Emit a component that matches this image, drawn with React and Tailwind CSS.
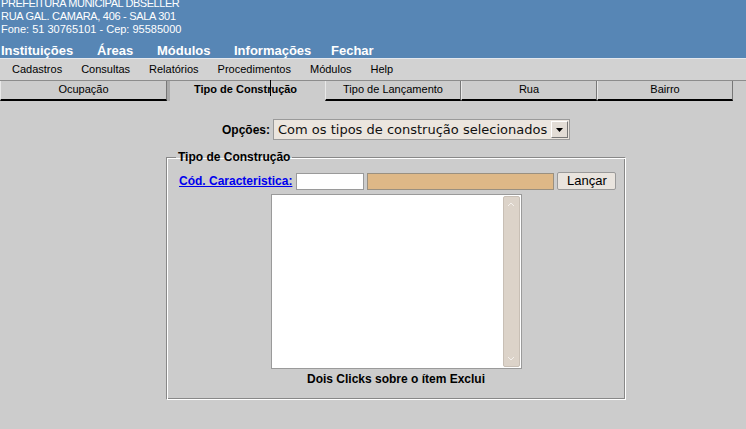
import React from "react";

export default function App() {
  return (
    <div className="relative w-[746px] h-[429px] overflow-hidden bg-[#cccccc] font-['Liberation_Sans',Arial,sans-serif] text-black">
      {/* Header */}
      <div className="flow-root h-[58px] bg-[#5786b5] text-white">
        <div className="-mt-[3px] pl-[1px] text-[11px] leading-[13px]">
          <div className="tracking-[-0.45px]">PREFEITURA MUNICIPAL DBSELLER</div>
          <div className="tracking-[-0.3px]">RUA GAL. CAMARA, 406 - SALA 301</div>
          <div className="whitespace-pre">Fone: 51 30765101 - Cep: 95585000</div>
        </div>
        <div className="mt-[7px] flex h-[15px] pl-[1px] text-[13px] font-bold leading-[15px]">
          <span className="w-[96px]">Instituições</span>
          <span className="w-[60px]">Áreas</span>
          <span className="w-[77px]">Módulos</span>
          <span className="w-[97px]">Informações</span>
          <span>Fechar</span>
        </div>
      </div>
      {/* Menu bar */}
      <div className="h-[1px] bg-[#e4e8ee]" />
      <div className="flex h-[22px] items-center gap-[19px] border-b border-[#8c8c8c] bg-[#d2d2d2] pl-[12px] text-[11px] leading-[13px]">
        <span>Cadastros</span>
        <span>Consultas</span>
        <span>Relatórios</span>
        <span>Procedimentos</span>
        <span>Módulos</span>
        <span>Help</span>
      </div>
      {/* Tabs */}
      <div className="flex h-[20px] text-[11px] leading-[13px]">
        <div className="w-[167px] border-l border-r border-b-2 border-l-[#e8e8e8] border-r-[#777] border-b-black pt-[2px] text-center">
          Ocupação
        </div>
        <div className="w-[158px] border-l-[3px] border-[#aaaaaa] pt-[2px] pl-[24px] font-bold">
          Tipo de Construção
        </div>
        <div className="w-[136px] border-l border-r border-b-2 border-l-[#e8e8e8] border-r-[#777] border-b-black pt-[2px] text-center">
          Tipo de Lançamento
        </div>
        <div className="w-[136px] border-l border-r border-b-2 border-l-[#e8e8e8] border-r-[#777] border-b-black pt-[2px] text-center">
          Rua
        </div>
        <div className="w-[136px] border-l border-r border-b-2 border-l-[#e8e8e8] border-r-[#777] border-b-black pt-[2px] text-center">
          Bairro
        </div>
      </div>

      {/* Opções */}
      <div className="mt-[18px] flex items-center pl-[222px]">
        <span className="mr-[3px] text-[12px] font-bold">Opções:</span>
        <div className="flex h-[21px] w-[297px] items-center border border-[#9a9a9a] bg-[#ebe5de]">
          <span className="flex-1 pl-[4px] font-['DejaVu_Sans',sans-serif] text-[13px] leading-[19px] text-[#111]">
            Com os tipos de construção selecionados
          </span>
          <div className="mr-[1px] flex h-[17px] w-[17px] items-center justify-center border border-t-white border-l-white border-r-[#777] border-b-[#777] bg-[#e2dcd5]">
            <svg width="7" height="4" viewBox="0 0 7 4">
              <path d="M0 0 H7 L3.5 4 Z" fill="#000" />
            </svg>
          </div>
        </div>
      </div>

      {/* Fieldset */}
      <fieldset className="ml-[166px] mt-[10px] w-[460px] border border-t-[#888] border-l-[#888] border-r-white border-b-white shadow-[inset_1px_1px_0_#ffffff,inset_-1px_-1px_0_#888888] pb-[13px]">
        <legend className="ml-[9px] px-[2px] text-[12px] font-bold leading-[14px]">Tipo de Construção</legend>
        <div className="mt-[8px] flex items-center pl-[12px]">
          <a className="text-[12px] font-bold leading-[14px] text-[#0000ee] underline">Cód. Caracteristica:</a>
          <div className="ml-[4px] h-[17px] w-[68px] border border-[#9a9a9a] bg-white" />
          <div className="ml-[3px] h-[17px] w-[187px] border border-[#9a9080] bg-[#deb887]" />
          <div className="ml-[3px] flex h-[18px] w-[59px] items-center justify-center rounded-[2px] border border-[#9a9a9a] bg-[#e9e4de] text-[13px]">
            Lançar
          </div>
        </div>
        <div className="mx-auto mt-[4px] flex h-[175px] w-[251px] border border-[#9a9a9a] bg-white">
          <div className="flex-1" />
          <div className="my-[1px] mr-[1px] flex w-[17px] flex-col items-center justify-between rounded-[2px] border border-[#c8bfb5] bg-[#dcd3c9] py-[5px]">
            <svg width="8" height="5" viewBox="0 0 8 5">
              <path d="M1 4 L4 1 L7 4" fill="none" stroke="#f4f0ec" strokeWidth="1" />
            </svg>
            <svg width="8" height="5" viewBox="0 0 8 5">
              <path d="M1 1 L4 4 L7 1" fill="none" stroke="#f4f0ec" strokeWidth="1" />
            </svg>
          </div>
        </div>
        <div className="mt-[3px] text-center text-[12px] font-bold leading-[14px]">
          Dois Clicks sobre o ítem Exclui
        </div>
      </fieldset>

      {/* mouse cursor */}
      <div className="absolute left-[270px] top-[80px] h-[16px] w-[1px] bg-black" />
    </div>
  );
}
